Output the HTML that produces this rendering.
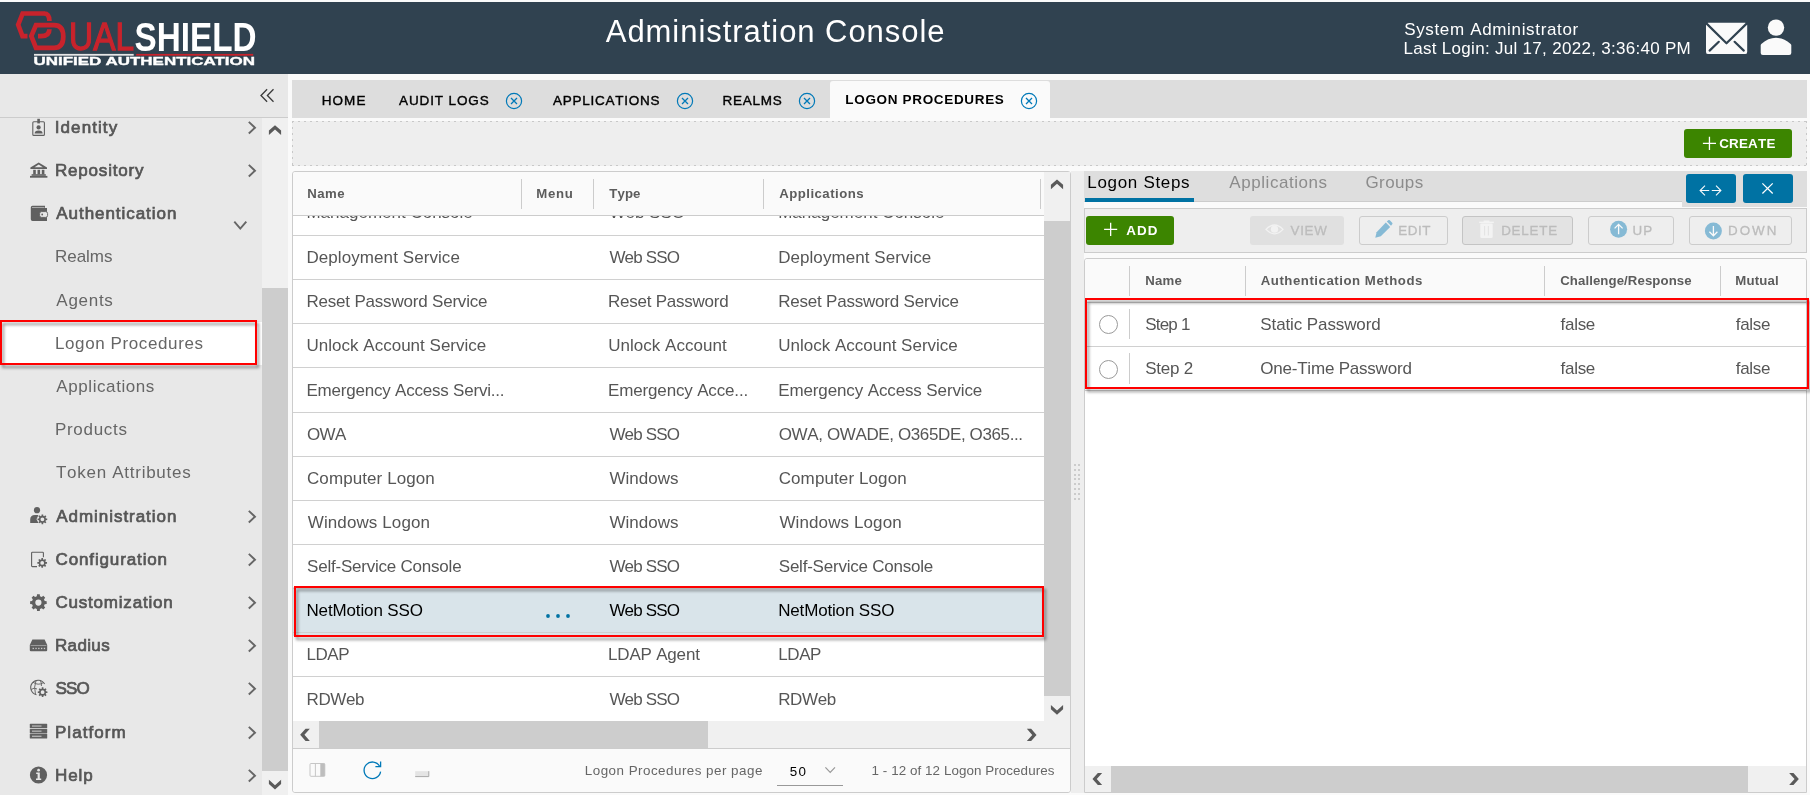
<!DOCTYPE html>
<html lang="en"><head><meta charset="utf-8"><title>Administration Console</title>
<style>
html,body{margin:0;padding:0}
body{width:1810px;height:795px;overflow:hidden;background:#fafafa;position:relative;font-family:"Liberation Sans",sans-serif}
.b{position:absolute;display:block}
.t{position:absolute;white-space:pre;display:block;font-kerning:none}
#root{position:absolute;left:0;top:0;width:1810px;height:795px;overflow:hidden;will-change:transform}
</style></head><body><div id="root">
<div class="b" style="left:0px;top:2px;width:1810.00px;height:71.50px;background:#304250;"></div>
<svg class="b" style="left:0;top:0" width="300" height="74" viewBox="0 0 300 74">
<g fill="none" stroke="#c8232c" stroke-width="4.7" stroke-linejoin="miter">
<path d="M44.5,13.5 L22.6,13.5 L18.2,24.7 L22.5,36.2 L27.5,36.2"/>
<path d="M44,13.5 Q49.4,13.5 49.4,21"/>
<path d="M49.4,29.2 Q49.4,36.2 41,36.2 L38,36.2"/>
<path d="M36,25.1 L54,25.1 C60,25.1 63.3,29 63.3,36.5 C63.3,44 60,47.9 54,47.9 L36,47.9 L31.3,36.1 Z"/>
</g>
<text x="69" y="50.2" font-family="Liberation Sans, sans-serif" font-size="39.5" fill="#c8232c" stroke="#c8232c" stroke-width="1.3" textLength="65" lengthAdjust="spacingAndGlyphs">UAL</text>
<text x="134.5" y="50.5" font-family="Liberation Sans, sans-serif" font-weight="700" font-size="40.5" fill="#ffffff" textLength="122" lengthAdjust="spacingAndGlyphs">SHIELD</text>
<rect x="34" y="53.9" width="99.7" height="1.8" fill="#e6e6e6"/>
<rect x="136.2" y="53.9" width="117" height="1.8" fill="#c8232c"/>
<text x="33.5" y="65.1" font-family="Liberation Sans, sans-serif" font-weight="700" font-size="11.6" fill="#ffffff" stroke="#ffffff" stroke-width="0.35" textLength="221.5" lengthAdjust="spacingAndGlyphs">UNIFIED AUTHENTICATION</text>
</svg>
<span class="t" style="left:605.79px;top:16.00px;font-size:31px;line-height:31px;letter-spacing:0.951px;color:#ffffff;">Administration Console</span>
<span class="t" style="left:1404.18px;top:21.00px;font-size:17px;line-height:17px;letter-spacing:0.659px;color:#ffffff;">System Administrator</span>
<span class="t" style="left:1403.56px;top:40.00px;font-size:17px;line-height:17px;letter-spacing:0.294px;color:#ffffff;">Last Login: Jul 17, 2022, 3:36:40 PM</span>
<svg class="b" style="left:1700px;top:12px" width="100" height="50" viewBox="1700 12 100 50">
<rect x="1706" y="22.8" width="41.2" height="31.3" rx="2.2" fill="#fafafa"/>
<g fill="none" stroke="#304250" stroke-width="2.2" stroke-linecap="round" stroke-linejoin="round">
<polyline points="1706.6,23.6 1726.5,43.3 1746.6,23.6"/>
<line x1="1709.6" y1="50.6" x2="1718.8" y2="41.8"/>
<line x1="1743.8" y1="50.6" x2="1734.6" y2="41.8"/>
</g>
<circle cx="1776" cy="27.6" r="8.2" fill="#fafafa"/>
<path d="M1760.7,45.2 Q1760.7,44.4 1761.6,43.8 Q1768,37.8 1776,37.8 Q1784,37.8 1790.4,43.8 Q1791.3,44.4 1791.3,45.2 L1791.3,53 Q1791.3,55.1 1789.2,55.1 L1762.8,55.1 Q1760.7,55.1 1760.7,53 Z" fill="#fafafa"/>
</svg>
<div class="b" style="left:0px;top:73.5px;width:262.00px;height:721.50px;background:#e8e8e8;"></div>
<div class="b" style="left:262px;top:73.5px;width:26.00px;height:44.50px;background:#e8e8e8;"></div>
<div class="b" style="left:262px;top:118px;width:26.00px;height:677.00px;background:#f0f0f0;"></div>
<div class="b" style="left:0px;top:117px;width:288.00px;height:1.00px;background:#cccccc;"></div>
<div class="b" style="left:262px;top:287.5px;width:26.00px;height:483.50px;background:#cdcdcd;"></div>
<div class="b" style="left:0px;top:322px;width:262.00px;height:43.00px;background:#ffffff;"></div>
<svg class="b" style="left:0;top:0" width="300" height="120"><g fill="none" stroke="#3a3a3a" stroke-width="1.3"><polyline points="267.1,89.3 261,95.5 267.1,101.7"/><polyline points="273.5,89.3 267.4,95.5 273.5,101.7"/></g></svg>
<svg class="b" style="left:0;top:0" width="1810" height="795"><polygon points="268.90,134.90 268.90,130.60 275.00,125.20 281.10,130.60 281.10,134.90 275.00,129.50" fill="#5a5a5a"/></svg>
<svg class="b" style="left:0;top:0" width="1810" height="795"><polygon points="268.90,779.75 268.90,784.05 275.00,789.45 281.10,784.05 281.10,779.75 275.00,785.15" fill="#5a5a5a"/></svg>
<span class="t" style="left:54.78px;top:119.00px;font-size:17px;line-height:17px;letter-spacing:1.085px;color:#565656;-webkit-text-stroke:0.7px #565656;">Identity</span>
<svg class="b" style="left:0;top:0" width="1810" height="795"><polyline points="248.8,121.9 255.0,127.7 248.8,133.5" fill="none" stroke="#666" stroke-width="1.9"/></svg>
<span class="t" style="left:54.96px;top:162.00px;font-size:17px;line-height:17px;letter-spacing:0.819px;color:#565656;-webkit-text-stroke:0.7px #565656;">Repository</span>
<svg class="b" style="left:0;top:0" width="1810" height="795"><polyline points="248.8,164.89999999999998 255.0,170.7 248.8,176.49999999999997" fill="none" stroke="#666" stroke-width="1.9"/></svg>
<span class="t" style="left:56.32px;top:205.00px;font-size:17px;line-height:17px;letter-spacing:0.946px;color:#565656;-webkit-text-stroke:0.7px #565656;">Authentication</span>
<svg class="b" style="left:0;top:0" width="1810" height="795"><polyline points="234.3,221.6 240.3,228.6 246.3,221.6" fill="none" stroke="#666" stroke-width="1.9"/></svg>
<span class="t" style="left:54.96px;top:248.00px;font-size:17px;line-height:17px;letter-spacing:-0.023px;color:#666666;">Realms</span>
<span class="t" style="left:56.32px;top:292.00px;font-size:17px;line-height:17px;letter-spacing:0.724px;color:#666666;">Agents</span>
<span class="t" style="left:54.96px;top:335.00px;font-size:17px;line-height:17px;letter-spacing:0.605px;color:#666666;">Logon Procedures</span>
<span class="t" style="left:56.32px;top:378.00px;font-size:17px;line-height:17px;letter-spacing:0.580px;color:#666666;">Applications</span>
<span class="t" style="left:54.96px;top:421.00px;font-size:17px;line-height:17px;letter-spacing:0.703px;color:#666666;">Products</span>
<span class="t" style="left:55.97px;top:464.00px;font-size:17px;line-height:17px;letter-spacing:0.728px;color:#666666;">Token Attributes</span>
<span class="t" style="left:56.32px;top:508.00px;font-size:17px;line-height:17px;letter-spacing:0.948px;color:#565656;-webkit-text-stroke:0.7px #565656;">Administration</span>
<svg class="b" style="left:0;top:0" width="1810" height="795"><polyline points="248.8,510.90000000000003 255.0,516.7 248.8,522.5" fill="none" stroke="#666" stroke-width="1.9"/></svg>
<span class="t" style="left:55.49px;top:551.00px;font-size:17px;line-height:17px;letter-spacing:0.871px;color:#565656;-webkit-text-stroke:0.7px #565656;">Configuration</span>
<svg class="b" style="left:0;top:0" width="1810" height="795"><polyline points="248.8,553.9000000000001 255.0,559.7 248.8,565.5000000000001" fill="none" stroke="#666" stroke-width="1.9"/></svg>
<span class="t" style="left:55.49px;top:594.00px;font-size:17px;line-height:17px;letter-spacing:0.788px;color:#565656;-webkit-text-stroke:0.7px #565656;">Customization</span>
<svg class="b" style="left:0;top:0" width="1810" height="795"><polyline points="248.8,596.9000000000001 255.0,602.7 248.8,608.5000000000001" fill="none" stroke="#666" stroke-width="1.9"/></svg>
<span class="t" style="left:54.96px;top:637.00px;font-size:17px;line-height:17px;letter-spacing:0.358px;color:#565656;-webkit-text-stroke:0.7px #565656;">Radius</span>
<svg class="b" style="left:0;top:0" width="1810" height="795"><polyline points="248.8,639.9000000000001 255.0,645.7 248.8,651.5000000000001" fill="none" stroke="#666" stroke-width="1.9"/></svg>
<span class="t" style="left:55.58px;top:680.00px;font-size:17px;line-height:17px;letter-spacing:-0.858px;color:#565656;-webkit-text-stroke:0.7px #565656;">SSO</span>
<svg class="b" style="left:0;top:0" width="1810" height="795"><polyline points="248.8,682.9000000000001 255.0,688.7 248.8,694.5000000000001" fill="none" stroke="#666" stroke-width="1.9"/></svg>
<span class="t" style="left:54.96px;top:724.00px;font-size:17px;line-height:17px;letter-spacing:1.075px;color:#565656;-webkit-text-stroke:0.7px #565656;">Platform</span>
<svg class="b" style="left:0;top:0" width="1810" height="795"><polyline points="248.8,726.9000000000001 255.0,732.7 248.8,738.5000000000001" fill="none" stroke="#666" stroke-width="1.9"/></svg>
<span class="t" style="left:54.96px;top:767.00px;font-size:17px;line-height:17px;letter-spacing:0.915px;color:#565656;-webkit-text-stroke:0.7px #565656;">Help</span>
<svg class="b" style="left:0;top:0" width="1810" height="795"><polyline points="248.8,769.9000000000001 255.0,775.7 248.8,781.5000000000001" fill="none" stroke="#666" stroke-width="1.9"/></svg>
<svg class="b" style="left:0;top:0" width="60" height="795" viewBox="0 0 60 795">
<rect x="32.8" y="121.8" width="11.6" height="13.6" rx="1" fill="none" stroke="#606060" stroke-width="1.1"/>
<rect x="37.3" y="118.8" width="2.6" height="4.6" fill="#606060"/>
<circle cx="38.6" cy="127.4" r="2.1" fill="#606060"/>
<path d="M34.6,133.6 Q34.6,130.4 38.6,130.4 Q42.6,130.4 42.6,133.6 Z" fill="#606060"/>
<path d="M38.7,162.4 L47,167.6 L47,169 L30.4,169 L30.4,167.6 Z" fill="#606060"/>
<path d="M38.7,164.6 L42.8,167.2 L34.6,167.2 Z" fill="#e8e8e8"/>
<rect x="33.2" y="169.8" width="2.6" height="4.6" fill="#606060"/>
<rect x="37.5" y="169.8" width="2.6" height="4.6" fill="#606060"/>
<rect x="41.8" y="169.8" width="2.6" height="4.6" fill="#606060"/>
<rect x="31.6" y="174.2" width="14.2" height="1.6" fill="#606060"/>
<rect x="30" y="175.9" width="17.4" height="1.8" fill="#606060"/>
<path d="M32.5,205.8 L45,205.8 L45,208 L47,208 L47,221 L32.5,221 Q30.8,221 30.8,219.3 L30.8,207.5 Q30.8,205.8 32.5,205.8 Z" fill="#606060"/>
<rect x="32" y="207" width="12.5" height="0.9" fill="#e8e8e8" opacity="0.6"/>
<rect x="39.6" y="211.6" width="8" height="5.8" rx="2" fill="#e8e8e8" stroke="#606060" stroke-width="0.9"/>
<circle cx="42.2" cy="214.5" r="0.9" fill="#606060"/>
<circle cx="37" cy="510.2" r="3.1" fill="#606060"/>
<path d="M30.2,523 L30.2,519.5 Q30.2,515 35,515 L38.5,515 L36.5,519.3 L38.5,523 Z" fill="#606060"/>
<path d="M45.89,518.43 L47.23,518.50 L47.23,520.10 L45.89,520.17 L45.48,521.16 L46.39,522.15 L45.25,523.29 L44.26,522.38 L43.27,522.79 L43.20,524.13 L41.60,524.13 L41.53,522.79 L40.54,522.38 L39.55,523.29 L38.41,522.15 L39.32,521.16 L38.91,520.17 L37.57,520.10 L37.57,518.50 L38.91,518.43 L39.32,517.44 L38.41,516.45 L39.55,515.31 L40.54,516.22 L41.53,515.81 L41.60,514.47 L43.20,514.47 L43.27,515.81 L44.26,516.22 L45.25,515.31 L46.39,516.45 L45.48,517.44 Z M44.30,519.30 A1.9,1.9 0 1 0 40.50,519.30 A1.9,1.9 0 1 0 44.30,519.30 Z" fill="#606060" fill-rule="evenodd"/>
<path d="M37,566.6 L32.4,566.6 Q31.6,566.6 31.6,565.8 L31.6,553 Q31.6,552.2 32.4,552.2 L42.6,552.2 Q43.4,552.2 43.4,553 L43.4,557.2" fill="none" stroke="#606060" stroke-width="1.1"/>
<path d="M45.69,562.03 L47.03,562.10 L47.03,563.70 L45.69,563.77 L45.28,564.76 L46.19,565.75 L45.05,566.89 L44.06,565.98 L43.07,566.39 L43.00,567.73 L41.40,567.73 L41.33,566.39 L40.34,565.98 L39.35,566.89 L38.21,565.75 L39.12,564.76 L38.71,563.77 L37.37,563.70 L37.37,562.10 L38.71,562.03 L39.12,561.04 L38.21,560.05 L39.35,558.91 L40.34,559.82 L41.33,559.41 L41.40,558.07 L43.00,558.07 L43.07,559.41 L44.06,559.82 L45.05,558.91 L46.19,560.05 L45.28,561.04 Z M44.10,562.90 A1.9,1.9 0 1 0 40.30,562.90 A1.9,1.9 0 1 0 44.10,562.90 Z" fill="#606060" fill-rule="evenodd"/>
<path d="M44.71,601.03 L46.69,601.22 L46.69,603.98 L44.71,604.17 L43.97,605.95 L45.23,607.48 L43.28,609.43 L41.75,608.17 L39.97,608.91 L39.78,610.89 L37.02,610.89 L36.83,608.91 L35.05,608.17 L33.52,609.43 L31.57,607.48 L32.83,605.95 L32.09,604.17 L30.11,603.98 L30.11,601.22 L32.09,601.03 L32.83,599.25 L31.57,597.72 L33.52,595.77 L35.05,597.03 L36.83,596.29 L37.02,594.31 L39.78,594.31 L39.97,596.29 L41.75,597.03 L43.28,595.77 L45.23,597.72 L43.97,599.25 Z M41.50,602.60 A3.1,3.1 0 1 0 35.30,602.60 A3.1,3.1 0 1 0 41.50,602.60 Z" fill="#606060" fill-rule="evenodd"/>
<path d="M32.4,639.4 L44.6,639.4 L47.2,645 L47.2,650.2 Q47.2,651.3 46.1,651.3 L30.9,651.3 Q29.8,651.3 29.8,650.2 L29.8,645 Z" fill="#606060"/>
<rect x="30.6" y="645" width="15.8" height="0.8" fill="#e8e8e8" opacity="0.55"/>
<rect x="32.6" y="647.8" width="1.3" height="1.3" fill="#e8e8e8" opacity="0.8"/>
<rect x="35.4" y="647.8" width="1.3" height="1.3" fill="#e8e8e8" opacity="0.8"/>
<rect x="38.2" y="647.8" width="1.3" height="1.3" fill="#e8e8e8" opacity="0.8"/>
<rect x="41" y="647.8" width="1.3" height="1.3" fill="#e8e8e8" opacity="0.8"/>
<rect x="43.8" y="647.8" width="1.3" height="1.3" fill="#e8e8e8" opacity="0.8"/>
<path d="M44.6,684 A7.4,7.4 0 1 0 36.5,694.8" fill="none" stroke="#606060" stroke-width="1.1"/>
<path d="M33,682.2 Q38,686 43.5,682.6 M31,689.5 Q34.5,687 37,689 M36,680.5 Q33.5,687 35.5,694.4 M40.5,680.8 Q41.8,683.5 41.4,686" fill="none" stroke="#606060" stroke-width="0.9"/>
<path d="M46.09,691.33 L47.43,691.40 L47.43,693.00 L46.09,693.07 L45.68,694.06 L46.59,695.05 L45.45,696.19 L44.46,695.28 L43.47,695.69 L43.40,697.03 L41.80,697.03 L41.73,695.69 L40.74,695.28 L39.75,696.19 L38.61,695.05 L39.52,694.06 L39.11,693.07 L37.77,693.00 L37.77,691.40 L39.11,691.33 L39.52,690.34 L38.61,689.35 L39.75,688.21 L40.74,689.12 L41.73,688.71 L41.80,687.37 L43.40,687.37 L43.47,688.71 L44.46,689.12 L45.45,688.21 L46.59,689.35 L45.68,690.34 Z M44.50,692.20 A1.9,1.9 0 1 0 40.70,692.20 A1.9,1.9 0 1 0 44.50,692.20 Z" fill="#606060" fill-rule="evenodd"/>
<rect x="29.8" y="723.8" width="17.4" height="4.5" rx="0.6" fill="#606060"/>
<rect x="32" y="725.5" width="9.5" height="1.1" fill="#e8e8e8" opacity="0.75"/>
<rect x="29.8" y="728.9" width="17.4" height="4.5" rx="0.6" fill="#606060"/>
<rect x="32" y="730.6" width="9.5" height="1.1" fill="#e8e8e8" opacity="0.75"/>
<rect x="29.8" y="734.0" width="17.4" height="4.5" rx="0.6" fill="#606060"/>
<rect x="32" y="735.7" width="9.5" height="1.1" fill="#e8e8e8" opacity="0.75"/>
<circle cx="38.5" cy="775" r="8.6" fill="#606060"/>
<path d="M36.2,772.6 L39.8,772.6 L39.8,778.6 L41.2,778.6 L41.2,780 L36,780 L36,778.6 L37.6,778.6 L37.6,774 L36.2,774 Z" fill="#e8e8e8"/>
<circle cx="38.6" cy="770.2" r="1.35" fill="#e8e8e8"/>
</svg>
<div class="b" style="left:0px;top:320px;width:257.40px;height:45.30px;background:transparent;border:2px solid #ff0000;box-sizing:border-box;filter:drop-shadow(2.5px 3px 1.6px rgba(0,0,0,.43));"></div>
<div class="b" style="left:292px;top:80px;width:1515.00px;height:37.80px;background:#dddddd;"></div>
<div class="b" style="left:830.3px;top:81px;width:219.90px;height:36.80px;background:#fafafa;border-radius:3px 3px 0 0;"></div>
<span class="t" style="left:321.74px;top:94.00px;font-size:13.5px;line-height:13.5px;letter-spacing:1.062px;color:#000;-webkit-text-stroke:0.4px #000;">HOME</span>
<span class="t" style="left:399.02px;top:94.00px;font-size:13.5px;line-height:13.5px;letter-spacing:0.887px;color:#000;-webkit-text-stroke:0.4px #000;">AUDIT LOGS</span>
<svg class="b" style="left:503.9px;top:90.5px" width="20" height="20" viewBox="-10 -10 20 20"><circle r="7.6" fill="none" stroke="#0079b8" stroke-width="1.2"/><path d="M-3,-3 L3,3 M3,-3 L-3,3" stroke="#0079b8" stroke-width="1.3" fill="none"/></svg>
<span class="t" style="left:553.02px;top:94.00px;font-size:13.5px;line-height:13.5px;letter-spacing:0.743px;color:#000;-webkit-text-stroke:0.4px #000;">APPLICATIONS</span>
<svg class="b" style="left:674.9px;top:90.5px" width="20" height="20" viewBox="-10 -10 20 20"><circle r="7.6" fill="none" stroke="#0079b8" stroke-width="1.2"/><path d="M-3,-3 L3,3 M3,-3 L-3,3" stroke="#0079b8" stroke-width="1.3" fill="none"/></svg>
<span class="t" style="left:722.54px;top:94.00px;font-size:13.5px;line-height:13.5px;letter-spacing:0.762px;color:#000;-webkit-text-stroke:0.4px #000;">REALMS</span>
<svg class="b" style="left:797.1px;top:90.5px" width="20" height="20" viewBox="-10 -10 20 20"><circle r="7.6" fill="none" stroke="#0079b8" stroke-width="1.2"/><path d="M-3,-3 L3,3 M3,-3 L-3,3" stroke="#0079b8" stroke-width="1.3" fill="none"/></svg>
<span class="t" style="left:845.35px;top:93.00px;font-size:13.5px;line-height:13.5px;letter-spacing:0.668px;color:#000;font-weight:700;">LOGON PROCEDURES</span>
<svg class="b" style="left:1018.7px;top:90.5px" width="20" height="20" viewBox="-10 -10 20 20"><circle r="7.6" fill="none" stroke="#0079b8" stroke-width="1.2"/><path d="M-3,-3 L3,3 M3,-3 L-3,3" stroke="#0079b8" stroke-width="1.3" fill="none"/></svg>
<div class="b" style="left:292px;top:121px;width:1515.00px;height:45.00px;background:#eeeeee;background-image:repeating-linear-gradient(90deg,#c8c8c8 0 2px,transparent 2px 6px),repeating-linear-gradient(90deg,#c8c8c8 0 2px,transparent 2px 6px),repeating-linear-gradient(180deg,#c8c8c8 0 2px,transparent 2px 6px),repeating-linear-gradient(180deg,#c8c8c8 0 2px,transparent 2px 6px);background-size:100% 1px,100% 1px,1px 100%,1px 100%;background-position:0 0,0 100%,0 0,100% 0;background-repeat:no-repeat;"></div>
<div class="b" style="left:1684px;top:129px;width:108.00px;height:29.00px;background:#3c8500;border-radius:3px;"></div>
<svg class="b" style="left:0;top:0" width="1810" height="300"><path d="M1702.9,143.4 H1716 M1709.45,136.8 V150" stroke="#fff" stroke-width="1.3" fill="none"/></svg>
<span class="t" style="left:1719.20px;top:137.00px;font-size:13.4px;line-height:13.4px;letter-spacing:0.216px;color:#ffffff;font-weight:700;">CREATE</span>
<div class="b" style="left:292px;top:171px;width:779.00px;height:622.00px;background:#ffffff;border:1px solid #cccccc;box-sizing:border-box;border-radius:3px;"></div>
<div class="b" style="left:293px;top:172px;width:751.00px;height:43.00px;background:#fafafa;border-radius:3px 0 0 0;"></div>
<div class="b" style="left:293px;top:215px;width:751.00px;height:1.00px;background:#cccccc;"></div>
<div class="b" style="left:521.0px;top:179.3px;width:1.00px;height:29.90px;background:#cccccc;"></div>
<div class="b" style="left:593.2px;top:179.3px;width:1.00px;height:29.90px;background:#cccccc;"></div>
<div class="b" style="left:763.0px;top:179.3px;width:1.00px;height:29.90px;background:#cccccc;"></div>
<div class="b" style="left:1040.0px;top:179.3px;width:1.00px;height:29.90px;background:#cccccc;"></div>
<span class="t" style="left:307.27px;top:187.00px;font-size:13.2px;line-height:13.2px;letter-spacing:0.427px;color:#5c5c5c;font-weight:700;">Name</span>
<span class="t" style="left:536.17px;top:187.00px;font-size:13.2px;line-height:13.2px;letter-spacing:0.763px;color:#5c5c5c;font-weight:700;">Menu</span>
<span class="t" style="left:609.20px;top:187.00px;font-size:13.2px;line-height:13.2px;letter-spacing:0.164px;color:#5c5c5c;font-weight:700;">Type</span>
<span class="t" style="left:779.22px;top:187.00px;font-size:13.2px;line-height:13.2px;letter-spacing:0.469px;color:#5c5c5c;font-weight:700;">Applications</span>
<div class="b" style="left:293px;top:216px;width:751px;height:505.2px;overflow:hidden">
<div class="b" style="left:0px;top:-25.25px;width:751.00px;height:1.00px;background:#d0d0d0;"></div>
<span class="t" style="left:13.46px;top:-12.00px;font-size:17px;line-height:17px;letter-spacing:0.000px;color:#565656;">Management Console</span>
<span class="t" style="left:316.38px;top:-12.00px;font-size:17px;line-height:17px;letter-spacing:0.000px;color:#565656;">Web SSO</span>
<span class="t" style="left:485.16px;top:-12.00px;font-size:17px;line-height:17px;letter-spacing:-0.000px;color:#565656;">Management Console</span>
<div class="b" style="left:0px;top:18.900000000000006px;width:751.00px;height:1.00px;background:#d0d0d0;"></div>
<span class="t" style="left:13.46px;top:33.00px;font-size:17px;line-height:17px;letter-spacing:0.078px;color:#565656;">Deployment Service</span>
<span class="t" style="left:316.38px;top:33.00px;font-size:17px;line-height:17px;letter-spacing:-0.815px;color:#565656;">Web SSO</span>
<span class="t" style="left:485.16px;top:33.00px;font-size:17px;line-height:17px;letter-spacing:0.061px;color:#565656;">Deployment Service</span>
<div class="b" style="left:0px;top:63.05000000000001px;width:751.00px;height:1.00px;background:#d0d0d0;"></div>
<span class="t" style="left:13.46px;top:77.00px;font-size:17px;line-height:17px;letter-spacing:-0.197px;color:#565656;">Reset Password Service</span>
<span class="t" style="left:315.06px;top:77.00px;font-size:17px;line-height:17px;letter-spacing:-0.245px;color:#565656;">Reset Password</span>
<span class="t" style="left:485.16px;top:77.00px;font-size:17px;line-height:17px;letter-spacing:-0.206px;color:#565656;">Reset Password Service</span>
<div class="b" style="left:0px;top:107.19999999999999px;width:751.00px;height:1.00px;background:#d0d0d0;"></div>
<span class="t" style="left:13.54px;top:121.00px;font-size:17px;line-height:17px;letter-spacing:0.012px;color:#565656;">Unlock Account Service</span>
<span class="t" style="left:315.14px;top:121.00px;font-size:17px;line-height:17px;letter-spacing:0.033px;color:#565656;">Unlock Account</span>
<span class="t" style="left:485.24px;top:121.00px;font-size:17px;line-height:17px;letter-spacing:0.002px;color:#565656;">Unlock Account Service</span>
<div class="b" style="left:0px;top:151.35000000000002px;width:751.00px;height:1.00px;background:#d0d0d0;"></div>
<span class="t" style="left:13.46px;top:166.00px;font-size:17px;line-height:17px;letter-spacing:-0.211px;color:#565656;">Emergency Access Servi...</span>
<span class="t" style="left:315.06px;top:166.00px;font-size:17px;line-height:17px;letter-spacing:-0.157px;color:#565656;">Emergency Acce...</span>
<span class="t" style="left:485.16px;top:166.00px;font-size:17px;line-height:17px;letter-spacing:-0.120px;color:#565656;">Emergency Access Service</span>
<div class="b" style="left:0px;top:195.5px;width:751.00px;height:1.00px;background:#d0d0d0;"></div>
<span class="t" style="left:14.04px;top:210.00px;font-size:17px;line-height:17px;letter-spacing:-0.685px;color:#565656;">OWA</span>
<span class="t" style="left:316.38px;top:210.00px;font-size:17px;line-height:17px;letter-spacing:-0.815px;color:#565656;">Web SSO</span>
<span class="t" style="left:485.74px;top:210.00px;font-size:17px;line-height:17px;letter-spacing:-0.376px;color:#565656;">OWA, OWADE, O365DE, O365...</span>
<div class="b" style="left:0px;top:239.64999999999998px;width:751.00px;height:1.00px;background:#d0d0d0;"></div>
<span class="t" style="left:13.99px;top:254.00px;font-size:17px;line-height:17px;letter-spacing:0.087px;color:#565656;">Computer Logon</span>
<span class="t" style="left:316.38px;top:254.00px;font-size:17px;line-height:17px;letter-spacing:0.021px;color:#565656;">Windows</span>
<span class="t" style="left:485.69px;top:254.00px;font-size:17px;line-height:17px;letter-spacing:0.102px;color:#565656;">Computer Logon</span>
<div class="b" style="left:0px;top:283.79999999999995px;width:751.00px;height:1.00px;background:#d0d0d0;"></div>
<span class="t" style="left:14.78px;top:298.00px;font-size:17px;line-height:17px;letter-spacing:0.102px;color:#565656;">Windows Logon</span>
<span class="t" style="left:316.38px;top:298.00px;font-size:17px;line-height:17px;letter-spacing:0.021px;color:#565656;">Windows</span>
<span class="t" style="left:486.48px;top:298.00px;font-size:17px;line-height:17px;letter-spacing:0.102px;color:#565656;">Windows Logon</span>
<div class="b" style="left:0px;top:327.95000000000005px;width:751.00px;height:1.00px;background:#d0d0d0;"></div>
<span class="t" style="left:14.08px;top:342.00px;font-size:17px;line-height:17px;letter-spacing:-0.221px;color:#565656;">Self-Service Console</span>
<span class="t" style="left:316.38px;top:342.00px;font-size:17px;line-height:17px;letter-spacing:-0.815px;color:#565656;">Web SSO</span>
<span class="t" style="left:485.78px;top:342.00px;font-size:17px;line-height:17px;letter-spacing:-0.221px;color:#565656;">Self-Service Console</span>
<div class="b" style="left:0px;top:371px;width:751.00px;height:48.50px;background:#d9e4ea;"></div>
<div class="b" style="left:0px;top:372.1px;width:751.00px;height:1.00px;background:#d0d0d0;"></div>
<span class="t" style="left:13.46px;top:386.00px;font-size:17px;line-height:17px;letter-spacing:-0.133px;color:#000000;">NetMotion SSO</span>
<span class="t" style="left:316.38px;top:386.00px;font-size:17px;line-height:17px;letter-spacing:-0.848px;color:#000000;">Web SSO</span>
<span class="t" style="left:485.16px;top:386.00px;font-size:17px;line-height:17px;letter-spacing:-0.158px;color:#000000;">NetMotion SSO</span>
<div class="b" style="left:0px;top:416.25px;width:751.00px;height:1.00px;background:#d0d0d0;"></div>
<span class="t" style="left:13.46px;top:430.00px;font-size:17px;line-height:17px;letter-spacing:-0.439px;color:#565656;">LDAP</span>
<span class="t" style="left:315.06px;top:430.00px;font-size:17px;line-height:17px;letter-spacing:-0.193px;color:#565656;">LDAP Agent</span>
<span class="t" style="left:485.16px;top:430.00px;font-size:17px;line-height:17px;letter-spacing:-0.373px;color:#565656;">LDAP</span>
<div class="b" style="left:0px;top:460.4px;width:751.00px;height:1.00px;background:#d0d0d0;"></div>
<span class="t" style="left:13.46px;top:475.00px;font-size:17px;line-height:17px;letter-spacing:-0.350px;color:#565656;">RDWeb</span>
<span class="t" style="left:316.38px;top:475.00px;font-size:17px;line-height:17px;letter-spacing:-0.815px;color:#565656;">Web SSO</span>
<span class="t" style="left:485.16px;top:475.00px;font-size:17px;line-height:17px;letter-spacing:-0.350px;color:#565656;">RDWeb</span>
</div>
<svg class="b" style="left:0;top:0" width="1810" height="795"><g fill="#0072a3"><circle cx="548" cy="616" r="1.9"/><circle cx="558" cy="616" r="1.9"/><circle cx="568" cy="616" r="1.9"/></g></svg>
<div class="b" style="left:1044px;top:172px;width:26.00px;height:576.00px;background:#f0f0f0;"></div>
<div class="b" style="left:1044px;top:221px;width:26.00px;height:475.00px;background:#cdcdcd;"></div>
<svg class="b" style="left:0;top:0" width="1810" height="795"><polygon points="1050.90,189.15 1050.90,184.85 1057.00,179.45 1063.10,184.85 1063.10,189.15 1057.00,183.75" fill="#5a5a5a"/></svg>
<svg class="b" style="left:0;top:0" width="1810" height="795"><polygon points="1050.90,705.05 1050.90,709.35 1057.00,714.75 1063.10,709.35 1063.10,705.05 1057.00,710.45" fill="#5a5a5a"/></svg>
<div class="b" style="left:293px;top:721.4px;width:751.00px;height:26.60px;background:#f0f0f0;"></div>
<div class="b" style="left:319.3px;top:721.4px;width:388.70px;height:26.60px;background:#cdcdcd;"></div>
<svg class="b" style="left:0;top:0" width="1810" height="795"><polygon points="309.85,728.70 305.55,728.70 300.15,734.80 305.55,740.90 309.85,740.90 304.45,734.80" fill="#5a5a5a"/></svg>
<svg class="b" style="left:0;top:0" width="1810" height="795"><polygon points="1026.85,728.80 1031.15,728.80 1036.55,734.90 1031.15,741.00 1026.85,741.00 1032.25,734.90" fill="#5a5a5a"/></svg>
<div class="b" style="left:293px;top:748px;width:777.00px;height:44.00px;background:#fafafa;border-top:1px solid #cccccc;box-sizing:border-box;border-radius:0 0 3px 3px;"></div>
<svg class="b" style="left:300px;top:755px" width="140" height="30" viewBox="300 755 140 30">
<rect x="310" y="763.5" width="14.8" height="12.8" rx="1" fill="none" stroke="#c6c6c6" stroke-width="1"/>
<rect x="320.3" y="763.5" width="4.5" height="12.8" fill="#bdbdbd"/>
<line x1="315.4" y1="763.5" x2="315.4" y2="776.3" stroke="#c6c6c6" stroke-width="1"/>
<path d="M379.6,766.2 A8.3,8.3 0 1 0 380.6,771.6" fill="none" stroke="#0079b8" stroke-width="1.3"/>
<path d="M380.6,761.4 L380.6,766.6 L375.4,766.6" fill="none" stroke="#0079b8" stroke-width="1.3"/>
<rect x="415.2" y="771.2" width="13.6" height="5.4" fill="#e4e4e4"/>
<path d="M415.2,776.6 H428.8 V771.2" fill="none" stroke="#a8a8a8" stroke-width="1"/>
</svg>

<span class="t" style="left:584.85px;top:764.00px;font-size:13.4px;line-height:13.4px;letter-spacing:0.478px;color:#666666;">Logon Procedures per page</span>
<span class="t" style="left:789.71px;top:765.00px;font-size:13.4px;line-height:13.4px;letter-spacing:1.255px;color:#000000;">50</span>
<div class="b" style="left:777.2px;top:785px;width:65.60px;height:1.00px;background:#999999;"></div>
<svg class="b" style="left:0;top:0" width="1810" height="795"><polyline points="825.4000000000001,767.3 830.2,772.3 835.0000000000001,767.3" fill="none" stroke="#999999" stroke-width="1.2"/></svg>
<span class="t" style="left:871.53px;top:764.00px;font-size:13.4px;line-height:13.4px;letter-spacing:0.071px;color:#666666;">1 - 12 of 12 Logon Procedures</span>
<div class="b" style="left:294.1px;top:586px;width:749.60px;height:50.50px;background:transparent;border:2px solid #ff0000;box-sizing:border-box;filter:drop-shadow(2.5px 3px 1.6px rgba(0,0,0,.43));"></div>
<div class="b" style="left:1071px;top:171px;width:13.00px;height:622.00px;background:#eeeeee;"></div>
<div class="b" style="left:1074px;top:463.9px;width:2.00px;height:2.00px;background:#cccccc;"></div>
<div class="b" style="left:1078px;top:463.9px;width:2.00px;height:2.00px;background:#cccccc;"></div>
<div class="b" style="left:1074px;top:468.7px;width:2.00px;height:2.00px;background:#cccccc;"></div>
<div class="b" style="left:1078px;top:468.7px;width:2.00px;height:2.00px;background:#cccccc;"></div>
<div class="b" style="left:1074px;top:473.5px;width:2.00px;height:2.00px;background:#cccccc;"></div>
<div class="b" style="left:1078px;top:473.5px;width:2.00px;height:2.00px;background:#cccccc;"></div>
<div class="b" style="left:1074px;top:478.29999999999995px;width:2.00px;height:2.00px;background:#cccccc;"></div>
<div class="b" style="left:1078px;top:478.29999999999995px;width:2.00px;height:2.00px;background:#cccccc;"></div>
<div class="b" style="left:1074px;top:483.09999999999997px;width:2.00px;height:2.00px;background:#cccccc;"></div>
<div class="b" style="left:1078px;top:483.09999999999997px;width:2.00px;height:2.00px;background:#cccccc;"></div>
<div class="b" style="left:1074px;top:487.9px;width:2.00px;height:2.00px;background:#cccccc;"></div>
<div class="b" style="left:1078px;top:487.9px;width:2.00px;height:2.00px;background:#cccccc;"></div>
<div class="b" style="left:1074px;top:492.7px;width:2.00px;height:2.00px;background:#cccccc;"></div>
<div class="b" style="left:1078px;top:492.7px;width:2.00px;height:2.00px;background:#cccccc;"></div>
<div class="b" style="left:1074px;top:497.5px;width:2.00px;height:2.00px;background:#cccccc;"></div>
<div class="b" style="left:1078px;top:497.5px;width:2.00px;height:2.00px;background:#cccccc;"></div>
<div class="b" style="left:1084px;top:171px;width:723.00px;height:30.00px;background:#dedede;"></div>
<div class="b" style="left:1682px;top:171px;width:125.00px;height:36.00px;background:#dedede;"></div>
<div class="b" style="left:1084px;top:201px;width:598.00px;height:1.00px;background:#cccccc;"></div>
<div class="b" style="left:1085px;top:198px;width:109.00px;height:4.00px;background:#0072a3;"></div>
<span class="t" style="left:1087.36px;top:174.00px;font-size:17px;line-height:17px;letter-spacing:0.674px;color:#000000;">Logon Steps</span>
<span class="t" style="left:1229.32px;top:174.00px;font-size:17px;line-height:17px;letter-spacing:0.553px;color:#8c8c8c;">Applications</span>
<span class="t" style="left:1365.50px;top:174.00px;font-size:17px;line-height:17px;letter-spacing:0.384px;color:#8c8c8c;">Groups</span>
<div class="b" style="left:1686px;top:174px;width:50.00px;height:29.00px;background:#0072a3;border-radius:3px;"></div>
<div class="b" style="left:1742.8px;top:174px;width:50.20px;height:29.00px;background:#0072a3;border-radius:3px;"></div>
<svg class="b" style="left:1680px;top:168px" width="125" height="40" viewBox="1680 168 125 40"><g fill="none" stroke="#f4f8fb" stroke-width="1.1">
<path d="M1709.2,190.5 H1700.2 M1705,185.6 L1700.1,190.5 L1705,195.4"/>
<path d="M1711.8,190.5 H1720.8 M1716,185.6 L1720.9,190.5 L1716,195.4"/>
<path d="M1762.4,183.4 L1772.7,193.5 M1772.7,183.4 L1762.4,193.5" stroke-width="1.25" stroke="#ffffff"/>
</g></svg>

<div class="b" style="left:1084px;top:208px;width:723.00px;height:44.60px;background:#eeeeee;border:1px solid #cccccc;box-sizing:border-box;"></div>
<div class="b" style="left:1086.1px;top:216.1px;width:87.90px;height:28.70px;background:#3c8500;border-radius:3px;"></div>
<svg class="b" style="left:0;top:0" width="1810" height="300"><path d="M1104.1,229.4 H1117.2 M1110.65,222.8 V236" stroke="#fff" stroke-width="1.3" fill="none"/></svg>
<span class="t" style="left:1126.22px;top:224.00px;font-size:13.4px;line-height:13.4px;letter-spacing:1.083px;color:#ffffff;font-weight:700;">ADD</span>
<div class="b" style="left:1250px;top:216.1px;width:93.70px;height:28.70px;background:#e0e0e0;border-radius:3px;"></div>
<span class="t" style="left:1290.59px;top:224.00px;font-size:13.4px;line-height:13.4px;letter-spacing:0.686px;color:#bcbcbc;-webkit-text-stroke:0.3px #bcbcbc;">VIEW</span>
<div class="b" style="left:1359px;top:216.1px;width:88.50px;height:28.70px;background:transparent;border:1px solid #cccccc;box-sizing:border-box;border-radius:3px;"></div>
<span class="t" style="left:1398.35px;top:224.00px;font-size:13.4px;line-height:13.4px;letter-spacing:0.528px;color:#bcbcbc;-webkit-text-stroke:0.3px #bcbcbc;">EDIT</span>
<div class="b" style="left:1462px;top:216.1px;width:111.00px;height:28.70px;background:#e3e3e3;border:1px solid #c4c4c4;box-sizing:border-box;border-radius:3px;"></div>
<span class="t" style="left:1501.15px;top:224.00px;font-size:13.4px;line-height:13.4px;letter-spacing:0.789px;color:#bcbcbc;-webkit-text-stroke:0.3px #bcbcbc;">DELETE</span>
<div class="b" style="left:1588.2px;top:216.1px;width:85.50px;height:28.70px;background:transparent;border:1px solid #cccccc;box-sizing:border-box;border-radius:3px;"></div>
<span class="t" style="left:1632.62px;top:224.00px;font-size:13.4px;line-height:13.4px;letter-spacing:1.026px;color:#bcbcbc;-webkit-text-stroke:0.3px #bcbcbc;">UP</span>
<div class="b" style="left:1689px;top:216.1px;width:102.80px;height:28.70px;background:transparent;border:1px solid #cccccc;box-sizing:border-box;border-radius:3px;"></div>
<span class="t" style="left:1727.95px;top:224.00px;font-size:13.4px;line-height:13.4px;letter-spacing:2.022px;color:#bcbcbc;-webkit-text-stroke:0.3px #bcbcbc;">DOWN</span>
<svg class="b" style="left:1245px;top:210px" width="560" height="40" viewBox="1245 210 560 40">
<path d="M1266,229.4 Q1274.5,220.6 1283,229.4 Q1274.5,238.2 1266,229.4 Z" fill="none" stroke="#f2f2f2" stroke-width="1.3"/>
<circle cx="1274.5" cy="229.2" r="3.6" fill="#f2f2f2"/>
<g fill="#86bad5">
<path d="M1375.3,237.7 L1376.6,232.2 L1385.8,222.6 L1390.2,226.9 L1380.8,236.3 Z"/>
<path d="M1386.8,221.6 L1388.2,220.2 Q1389,219.6 1389.8,220.3 L1392.2,222.7 Q1392.9,223.5 1392.2,224.3 L1391,225.7 Z"/>
</g>
<g fill="#f3f3f3">
<rect x="1480.3" y="223.6" width="12.4" height="14.4" rx="1.2"/>
<rect x="1479.2" y="221.6" width="14.6" height="1.5"/>
<rect x="1483.6" y="220.5" width="5.8" height="1.6"/>
</g>
<g stroke="#e0e0e0" stroke-width="0.9"><line x1="1484.6" y1="226" x2="1484.6" y2="235.5"/><line x1="1488.4" y1="226" x2="1488.4" y2="235.5"/></g>
<circle cx="1618.6" cy="229.3" r="8.5" fill="#86bad5"/>
<path d="M1618.6,234.3 V224.6 M1614.6,228.4 L1618.6,224.4 L1622.6,228.4" fill="none" stroke="#fafafa" stroke-width="1.3"/>
<circle cx="1713.4" cy="230.9" r="8.5" fill="#86bad5"/>
<path d="M1713.4,225.9 V235.6 M1709.4,231.8 L1713.4,235.8 L1717.4,231.8" fill="none" stroke="#fafafa" stroke-width="1.3"/>
</svg>

<div class="b" style="left:1084px;top:258px;width:723.00px;height:535.00px;background:#ffffff;border:1px solid #cccccc;box-sizing:border-box;border-radius:3px 3px 0 0;"></div>
<div class="b" style="left:1085px;top:259px;width:721.00px;height:43.00px;background:#fafafa;border-radius:3px 3px 0 0;"></div>
<div class="b" style="left:1085px;top:302px;width:721.00px;height:1.00px;background:#cccccc;"></div>
<div class="b" style="left:1085px;top:346px;width:721.00px;height:1.00px;background:#d0d0d0;"></div>
<div class="b" style="left:1085px;top:390px;width:721.00px;height:1.00px;background:#d0d0d0;"></div>
<div class="b" style="left:1129.0px;top:266.2px;width:1.00px;height:29.60px;background:#cccccc;"></div>
<div class="b" style="left:1244.7px;top:266.2px;width:1.00px;height:29.60px;background:#cccccc;"></div>
<div class="b" style="left:1544.2px;top:266.2px;width:1.00px;height:29.60px;background:#cccccc;"></div>
<div class="b" style="left:1719.9px;top:266.2px;width:1.00px;height:29.60px;background:#cccccc;"></div>
<div class="b" style="left:1129px;top:309.4px;width:1.00px;height:29.60px;background:#cccccc;"></div>
<div class="b" style="left:1129px;top:353.4px;width:1.00px;height:30.20px;background:#cccccc;"></div>
<span class="t" style="left:1145.27px;top:274.00px;font-size:13.2px;line-height:13.2px;letter-spacing:0.194px;color:#5c5c5c;font-weight:700;">Name</span>
<span class="t" style="left:1260.72px;top:274.00px;font-size:13.2px;line-height:13.2px;letter-spacing:0.545px;color:#5c5c5c;font-weight:700;">Authentication Methods</span>
<span class="t" style="left:1560.21px;top:274.00px;font-size:13.2px;line-height:13.2px;letter-spacing:0.098px;color:#5c5c5c;font-weight:700;">Challenge/Response</span>
<span class="t" style="left:1735.37px;top:274.00px;font-size:13.2px;line-height:13.2px;letter-spacing:0.158px;color:#5c5c5c;font-weight:700;">Mutual</span>
<div class="b" style="left:1098.6px;top:315.1px;width:19.40px;height:19.40px;background:#ffffff;border:1px solid #9a9a9a;box-sizing:border-box;border-radius:50%;"></div>
<div class="b" style="left:1098.6px;top:359.6px;width:19.40px;height:19.40px;background:#ffffff;border:1px solid #9a9a9a;box-sizing:border-box;border-radius:50%;"></div>
<span class="t" style="left:1145.18px;top:316.00px;font-size:17px;line-height:17px;letter-spacing:-0.789px;color:#565656;">Step 1</span>
<span class="t" style="left:1260.28px;top:316.00px;font-size:17px;line-height:17px;letter-spacing:-0.101px;color:#565656;">Static Password</span>
<span class="t" style="left:1560.61px;top:316.00px;font-size:17px;line-height:17px;letter-spacing:-0.303px;color:#565656;">false</span>
<span class="t" style="left:1735.81px;top:316.00px;font-size:17px;line-height:17px;letter-spacing:-0.303px;color:#565656;">false</span>
<span class="t" style="left:1145.18px;top:360.00px;font-size:17px;line-height:17px;letter-spacing:-0.224px;color:#565656;">Step 2</span>
<span class="t" style="left:1260.24px;top:360.00px;font-size:17px;line-height:17px;letter-spacing:-0.208px;color:#565656;">One-Time Password</span>
<span class="t" style="left:1560.61px;top:360.00px;font-size:17px;line-height:17px;letter-spacing:-0.303px;color:#565656;">false</span>
<span class="t" style="left:1735.81px;top:360.00px;font-size:17px;line-height:17px;letter-spacing:-0.303px;color:#565656;">false</span>
<div class="b" style="left:1085px;top:766.2px;width:721.00px;height:25.80px;background:#f0f0f0;"></div>
<div class="b" style="left:1111px;top:766.2px;width:637.00px;height:25.80px;background:#cdcdcd;"></div>
<svg class="b" style="left:0;top:0" width="1810" height="795"><polygon points="1102.15,772.90 1097.85,772.90 1092.45,779.00 1097.85,785.10 1102.15,785.10 1096.75,779.00" fill="#5a5a5a"/></svg>
<svg class="b" style="left:0;top:0" width="1810" height="795"><polygon points="1789.15,772.90 1793.45,772.90 1798.85,779.00 1793.45,785.10 1789.15,785.10 1794.55,779.00" fill="#5a5a5a"/></svg>
<div class="b" style="left:1085.1px;top:298.2px;width:724.20px;height:91.00px;background:transparent;border:2px solid #ff0000;box-sizing:border-box;filter:drop-shadow(2.5px 3px 1.6px rgba(0,0,0,.43));"></div>
</div></body></html>
